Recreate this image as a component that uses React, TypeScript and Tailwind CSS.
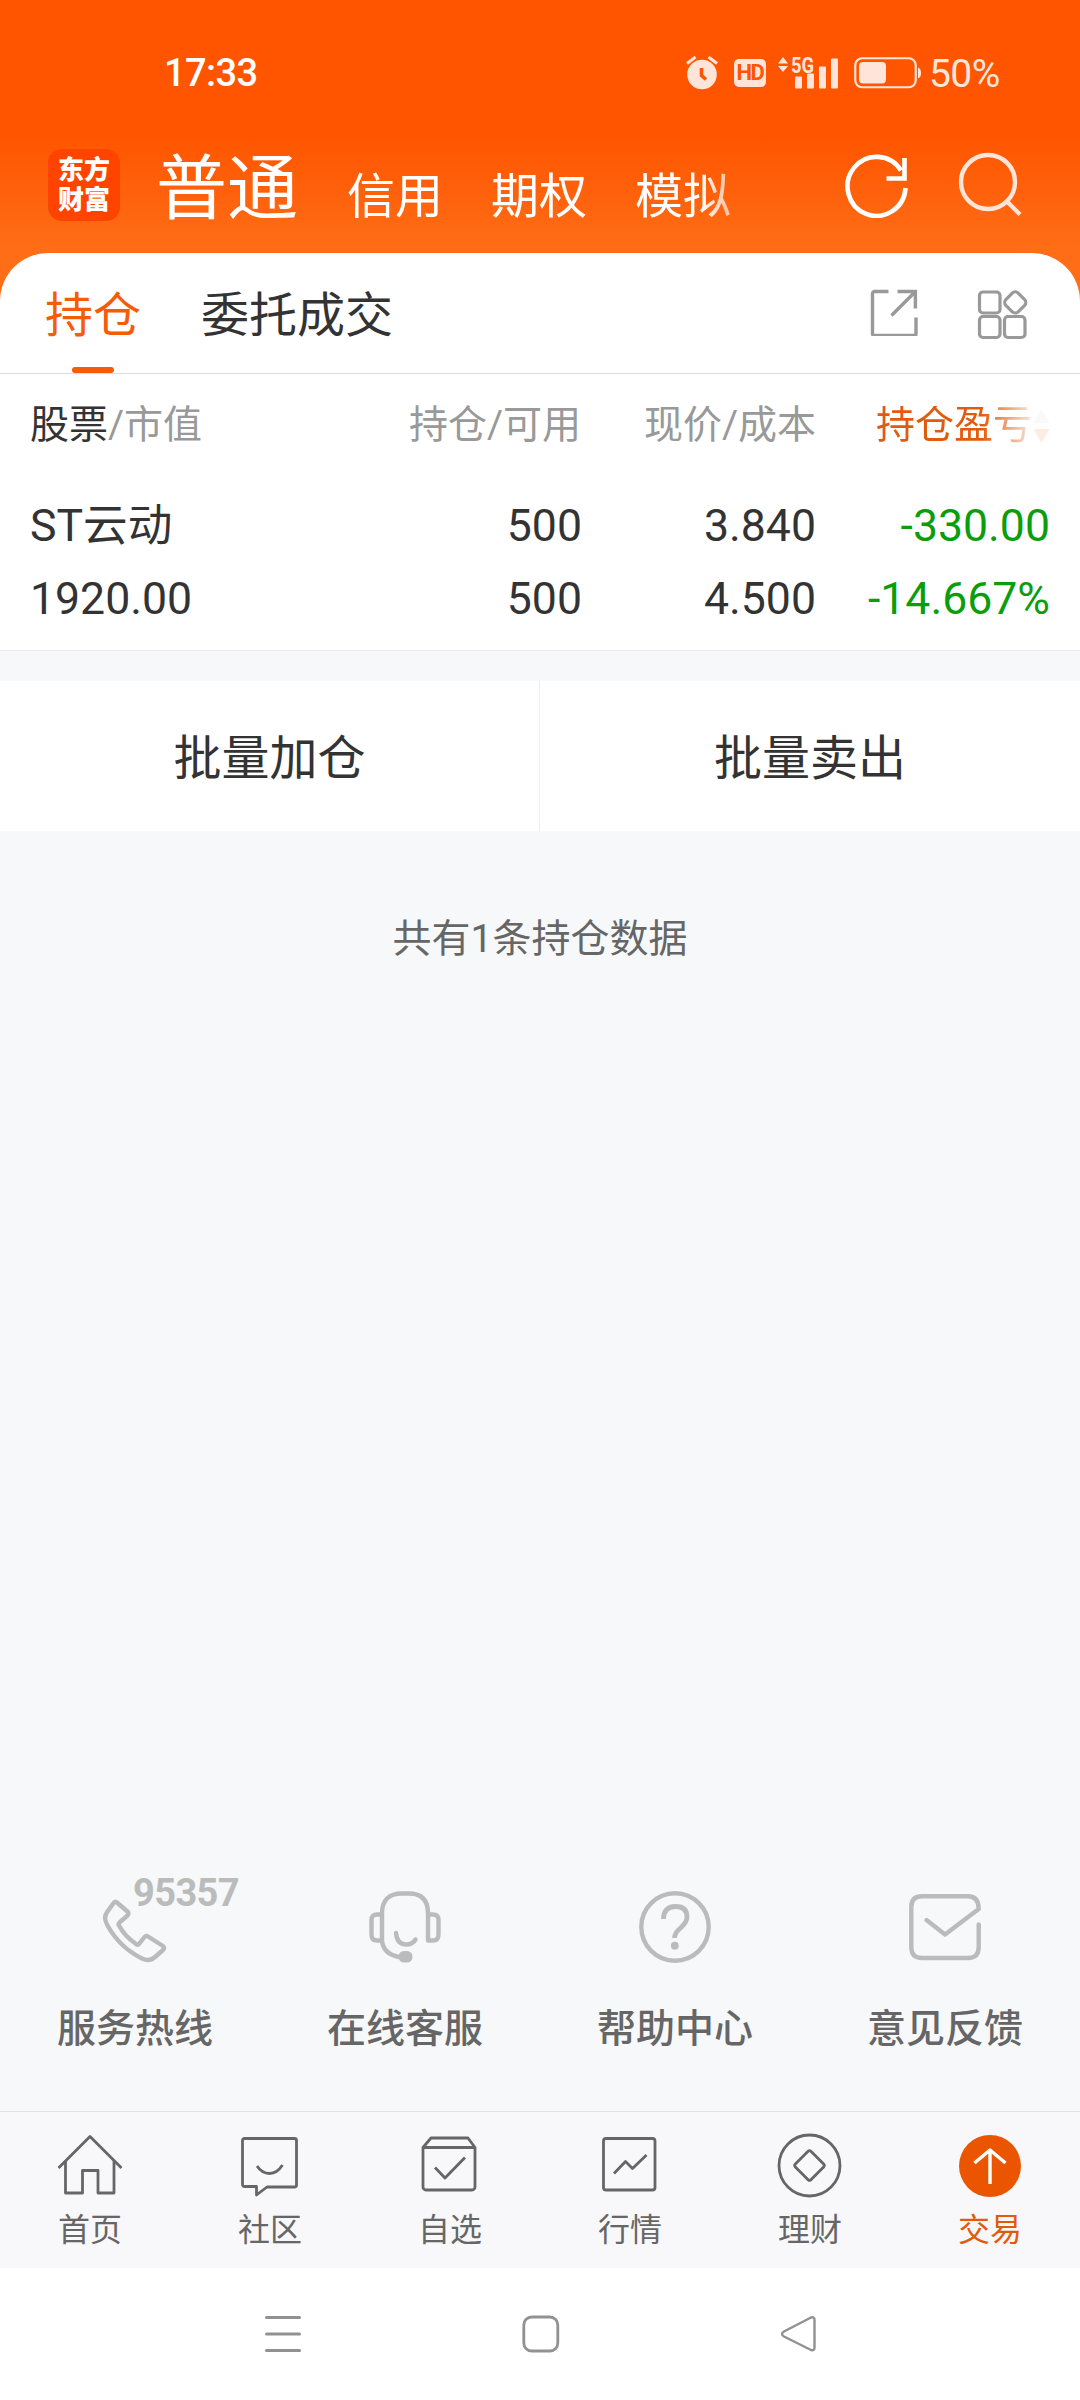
import { useState } from 'react';
import type { ReactNode } from 'react';

// ---------- status bar ----------

function StatusBar() {
  return (
    <div className="flex h-[146px] items-center text-[#FFE5D9]">
      <span className="ml-[164px] w-[522px] text-[38px] leading-none font-medium tracking-[-0.6px] text-white">17:33</span>

      <svg width="32" height="34" viewBox="0 0 32 34" fill="none">
        <circle cx="16" cy="18.5" r="14.8" fill="currentColor" />
        <path d="M1 7.5 9.5 1M31 7.5 22.500 1" stroke="currentColor" strokeWidth="3" />
        <path d="M15.500 12v7.500l4.500 4" stroke="#FF5500" strokeWidth="3.600" />
      </svg>

      <span className="ml-4 flex h-7 w-8 items-center justify-center rounded-[5px] bg-[#FFE5D9] text-[22px] leading-none font-bold tracking-[-1.5px] text-[#FF5500]">
        HD
      </span>

      <svg className="ml-3 overflow-visible" width="60" height="34" viewBox="0 0 60 34" fill="currentColor">
        <path d="M5 1 10 7.500H0zM5 16 0 10h10z" />
        <text x="13" y="16.500" fontSize="22" fontWeight="700" textLength="23" lengthAdjust="spacingAndGlyphs">5G</text>
        <rect x="17" y="20.500" width="7" height="12" rx="1" />
        <rect x="29" y="17.500" width="7" height="15" rx="1" />
        <rect x="41" y="10.500" width="7" height="22" rx="1" />
        <rect x="53" y="2.500" width="7" height="30" rx="1" />
      </svg>

      <svg className="ml-4" width="67" height="32" viewBox="0 0 67 32">
        <rect x="1.250" y="1.250" width="60.500" height="29" rx="7" fill="none" stroke="currentColor" strokeWidth="2.200" />
        <rect x="5" y="5" width="27" height="21.500" rx="4" fill="currentColor" />
        <path d="M64 10.500q3 1 3 5.500t-3 5.500z" fill="currentColor" />
      </svg>

      <span className="mt-[3px] ml-2 text-[39px] leading-none tracking-[-0.6px]">50%</span>
    </div>
  );
}

// ---------- header ----------

const accounts = ['普通', '信用', '期权', '模拟'];

function Header() {
  const [account, setAccount] = useState('普通');

  return (
    <header className="flex h-[107px] items-start">
      <div className="mt-[3px] ml-12 flex h-[72px] w-[72px] flex-col items-center justify-center rounded-[14px] bg-[#FF4400] text-[26px] leading-[30px] font-black text-white">
        <span>东方</span>
        <span>财富</span>
      </div>

      <nav className="ml-9 flex h-[107px] w-[640px] items-baseline gap-12 pt-[4px] text-white [mask-image:linear-gradient(to_right,#000_545px,transparent_615px)]">
        {accounts.map((name) => (
          <button
            key={name}
            onClick={() => setAccount(name)}
            className={`shrink-0 whitespace-nowrap ${account === name ? 'mr-px text-[71px] leading-[78px]' : 'text-[48px] leading-[52px]'}`}
          >
            {name}
          </button>
        ))}
      </nav>

      <svg className="mt-[8px] ml-[49px] shrink-0" width="64" height="64" viewBox="0 0 64 64" fill="none" stroke="#fff" strokeWidth="4.600">
        <path d="M60.500 34A29 29.500 0 1 1 56 16.500" />
        <path d="M59.500 4v20.500H41.500" />
      </svg>
      <svg className="ml-[49px] mt-[6px] shrink-0" width="64" height="64" viewBox="0 0 64 64" fill="none" stroke="#FFE5D9" strokeWidth="4.400">
        <circle cx="30" cy="30" r="27" />
        <path d="M48.500 49 62 62.500" />
      </svg>
    </header>
  );
}

// ---------- tabs ----------

function SheetTabs() {
  return (
    <div className="flex h-[121px] rounded-t-[48px] border-b border-[#DDDDDD] bg-white pl-[45px]">
      <button className="flex flex-col items-center text-[48px] text-[#F55C08]">
        <span className="flex h-[114px] items-center pt-[12px] leading-none">持仓</span>
        <span className="h-1.5 w-[42px] rounded-full bg-[#F55C08]" />
      </button>
      <button className="ml-[60px] flex h-[114px] items-center pt-[12px] text-[48px] leading-none text-[#333333]">委托成交</button>

      <div className="ml-auto flex pt-[35px] pr-[52px] text-[#999999]">
        <svg width="48" height="48" viewBox="0 0 48 48" fill="none" stroke="currentColor" strokeWidth="3.400">
          <path d="M18.500 3.500H4.500a2 2 0 0 0-2 2v40a2 2 0 0 0 2 2h39.500a2 2 0 0 0 2-2V29.500" />
          <path d="M27.500 3.500h17.900v17M44.500 4.500 21.500 27.500" />
        </svg>
        <svg className="ml-[58px]" width="52" height="52" viewBox="0 0 52 52" fill="none" stroke="currentColor" strokeWidth="3.200">
          <rect x="3.500" y="4" width="20.500" height="21" rx="3.500" />
          <rect x="3.500" y="28.500" width="20.500" height="21" rx="3.500" />
          <rect x="28.500" y="28.500" width="20.500" height="21" rx="3.500" />
          <rect x="30.500" y="5.700" width="17.500" height="17.500" rx="4.500" transform="rotate(45 39.250 14.450)" />
        </svg>
      </div>
    </div>
  );
}

// ---------- holdings ----------

const holdings = [
  { name: 'ST云动', value: '1920.00', amount: '500', usable: '500', price: '3.840', cost: '4.500', profit: '-330.00', rate: '-14.667%' },
];

function Holdings() {
  return (
    <section className="h-[277px] border-b border-[#EBEBEB] bg-white pr-[30px] pl-[30px]">
      <div className="grid h-[103px] grid-cols-[251px_300px_235px_234px] items-center text-right text-[39px] leading-none text-[#999999]">
        <span className="text-left"><span className="text-[#333333]">股票</span>/市值</span>
        <span>持仓/可用</span>
        <span>现价/成本</span>
        <span className="flex items-center justify-end [mask-image:linear-gradient(to_right,#000_165px,rgba(0,0,0,0.12)_218px)]">
          <span className="text-[#E25A0C]">持仓盈亏</span>
          <svg className="ml-px" width="17" height="36" viewBox="0 0 17 36">
            <path d="M8.500 1 16.500 15H.5z" fill="#CCCCCC" />
            <path d="M8.500 35 .5 21h16z" fill="#F55C08" />
          </svg>
        </span>
      </div>

      {holdings.map((h) => (
        <div key={h.name} className="grid grid-cols-[251px_301px_234px_234px] pt-[13px] text-right text-[44.6px] leading-[73px] text-[#333333]">
          <span className="text-left">{h.name}</span>
          <span>{h.amount}</span>
          <span>{h.price}</span>
          <span className="text-[#0A9D0C]">{h.profit}</span>
          <span className="text-left">{h.value}</span>
          <span>{h.usable}</span>
          <span>{h.cost}</span>
          <span className="whitespace-nowrap text-[#0A9D0C]">{h.rate}</span>
        </div>
      ))}
    </section>
  );
}

// ---------- services ----------

const PhoneIcon = () => (
  <svg width="72" height="72" viewBox="0 0 72 72" fill="none" stroke="currentColor" strokeWidth="4.400" strokeLinejoin="round">
    <path d="M18 11.500q-1.500-1.500-3 0L8.500 20.500Q4 26 8 33.500 20 56 43 67.500q7.500 3.500 13-1.500l8-7q2-2 0-4L49 45.500q-2-1-3.500.5l-5.500 7q-1.500 1.500-3 0Q25.500 45 20 34.500q-1-1.500.5-3l8-7q1.500-1.500.5-3.500z" />
  </svg>
);

const HeadsetIcon = () => (
  <svg width="72" height="72" viewBox="0 0 72 72" fill="none" stroke="currentColor" strokeWidth="4.400" strokeLinecap="round" strokeLinejoin="round">
    <path d="M13 49.500V22.500Q13 2.500 33 2.500h7Q59 2.500 59 22.500V49.500h5q5.500 0 5.500-6V29q0-5.500-5.500-5.500h-5" />
    <path d="M13 23.500H8q-5.500 0-5.500 5.500v14.500q0 6 5.500 6h5q1 13 16.500 16.500" />
    <path d="M27 42q1 11.500 10.500 11.500 6 0 9-5" />
    <rect x="29.500" y="60" width="14" height="11.500" rx="5.500" fill="currentColor" stroke="none" />
  </svg>
);

const HelpIcon = () => (
  <svg width="72" height="72" viewBox="0 0 72 72" fill="none" stroke="currentColor" strokeWidth="4.400">
    <circle cx="36" cy="36" r="33.700" />
    <path d="M24.500 28q0-12.500 12-12.500Q48 15.500 48 26q0 5-6 10.500-6.500 5.500-6.500 10.500" strokeWidth="4.800" />
    <circle cx="35.800" cy="54.700" r="3.900" fill="currentColor" stroke="none" />
  </svg>
);

const MailIcon = () => (
  <svg width="72" height="72" viewBox="0 0 72 72" fill="none" stroke="currentColor" strokeWidth="4.400" strokeLinecap="round" strokeLinejoin="round">
    <path d="M69.700 33.500v22.500Q69.700 67 59 67H13Q2.300 67 2.300 56V16Q2.300 5.300 13 5.300h46Q69.700 5.300 69.700 18L36 43.500 17.500 29" />
  </svg>
);

const services: { label: string; icon: ReactNode; badge?: string }[] = [
  { label: '服务热线', icon: <PhoneIcon />, badge: '95357' },
  { label: '在线客服', icon: <HeadsetIcon /> },
  { label: '帮助中心', icon: <HelpIcon /> },
  { label: '意见反馈', icon: <MailIcon /> },
];

function Services() {
  return (
    <div className="grid h-[220px] grid-cols-4">
      {services.map((s) => (
        <button key={s.label} className="relative flex flex-col items-center text-[#BBBBBB]">
          {s.icon}
          {s.badge && <span className="absolute top-[-17px] left-[133px] text-[38px] leading-none font-bold tracking-[-0.6px]">{s.badge}</span>}
          <span className="mt-[47px] text-[39px] leading-none font-medium text-[#666666]">{s.label}</span>
        </button>
      ))}
    </div>
  );
}

// ---------- bottom navigation ----------

const navItems: { label: string; active?: boolean; icon: ReactNode }[] = [
  {
    label: '首页',
    icon: (
      <>
        <path d="M2.500 35 34 3.500 65.500 35" />
        <path d="M9.500 28v32h17V37.500h15.500V60h16V28" />
      </>
    ),
  },
  {
    label: '社区',
    icon: (
      <>
        <path d="M8.500 5.500h50a2 2 0 0 1 2 2v44.500a2 2 0 0 1-2 2H31L20.500 62v-8.500H8.500a2 2 0 0 1-2-2v-44a2 2 0 0 1 2-2z" />
        <path d="M21 33q5 7.500 12.500 7.500T46.500 32" />
      </>
    ),
  },
  {
    label: '自选',
    icon: (
      <>
        <path d="M7 14.500V54a3 3 0 0 0 3 3h46a3 3 0 0 0 3-3V14.500L52 5H15zM7 14.500h52" />
        <path d="M19 34.500 29 45l20-20.500" />
      </>
    ),
  },
  {
    label: '行情',
    icon: (
      <>
        <rect x="7.500" y="5.500" width="51.500" height="51.500" rx="2.500" />
        <path d="M18 40.500 29.500 28.500l7 7L50.500 22" />
      </>
    ),
  },
  {
    label: '理财',
    icon: (
      <>
        <circle cx="33.500" cy="32.500" r="30.500" />
        <rect x="22.500" y="21.500" width="22" height="22" rx="2" transform="rotate(45 33.500 32.500)" />
      </>
    ),
  },
  {
    label: '交易',
    active: true,
    icon: (
      <>
        <circle cx="34" cy="33" r="31" fill="#EC5500" stroke="none" />
        <path d="M34 51V17M18.500 30 34 17 49.500 30" stroke="#fff" strokeWidth="3.400" />
      </>
    ),
  },
];

function BottomNav() {
  return (
    <nav className="grid h-[157px] grid-cols-6 border-t border-[#E2E3E5] bg-[#F8F8FA] pt-[21px]">
      {navItems.map((item) => (
        <button key={item.label} className={`flex flex-col items-center ${item.active ? 'text-[#E25A0C]' : 'text-[#666666]'}`}>
          <svg className="mr-[2px]" width="67" height="67" viewBox="0 0 67 67" fill="none" stroke="currentColor" strokeWidth="2.800" strokeLinejoin="round">
            {item.icon}
          </svg>
          <span className="mt-[14px] text-[32px] leading-none">{item.label}</span>
        </button>
      ))}
    </nav>
  );
}

function SystemNav() {
  return (
    <div className="flex h-[132px] bg-white pt-[47px] pl-[264px]">
      <svg width="38" height="38" viewBox="0 0 38 38" stroke="#919191" strokeWidth="3" strokeLinecap="round">
        <path d="M2.500 2.500h33M2.500 19h33M2.500 35.500h33" />
      </svg>
      <svg className="ml-[220px]" width="38" height="38" viewBox="0 0 38 38" fill="none" stroke="#919191" strokeWidth="2.800">
        <rect x="1.800" y="2" width="34" height="34" rx="8" />
      </svg>
      <svg className="ml-[221px]" width="38" height="38" viewBox="0 0 38 38" fill="none" stroke="#919191" strokeWidth="2.400">
        <path d="M30 2.500 3 16.500q-4 2.500 0 5L30 35q3.500 1 3.500-2.500V5Q33.500 1.500 30 2.500z" />
      </svg>
    </div>
  );
}

export default function App() {
  return (
    <div className="flex h-[2400px] w-[1080px] flex-col overflow-hidden bg-[#F7F8FA] font-['Roboto','Noto_Sans_CJK_SC',sans-serif]">
      <div className="bg-[linear-gradient(to_bottom,#FF5500_0px,#FF5500_135px,#FF6D17_250px)]">
        <StatusBar />
        <Header />
        <SheetTabs />
      </div>
      <Holdings />

      <div className="mt-[30px] grid h-[150px] grid-cols-2 bg-white text-[48px] leading-none text-[#333333]">
        <button className="border-r border-[#EEEEEE] pt-1.5">批量加仓</button>
        <button className="pt-1.5">批量卖出</button>
      </div>
      <p className="mt-[89px] flex-1 text-center text-[39px] leading-none text-[#666666]">共有1条持仓数据</p>

      <Services />
      <BottomNav />
      <SystemNav />
    </div>
  );
}
